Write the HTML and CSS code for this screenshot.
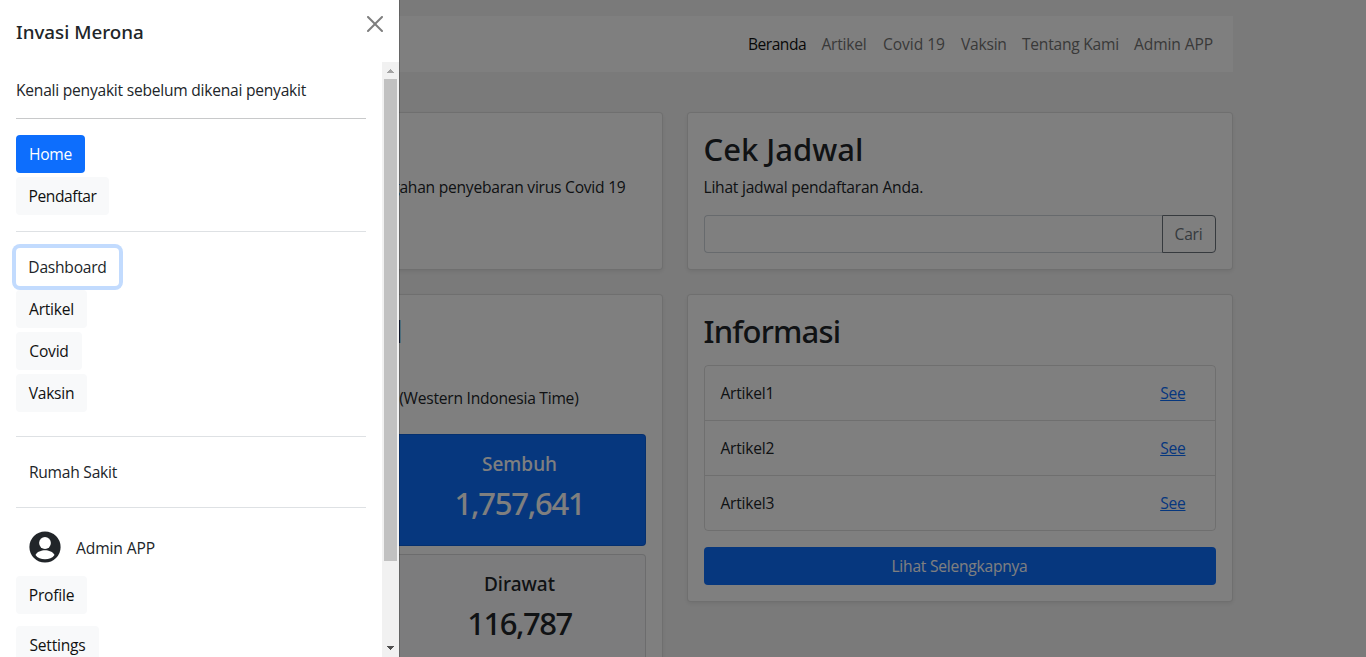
FILE: index.html
```html
<!DOCTYPE html>
<html lang="id">
<head>
<meta charset="utf-8">
<title>Invasi Merona</title>
<link rel="stylesheet" href="styles.css">
</head>
<body>
<div class="page">
  <nav class="navbar">
    <a class="nav-link active">Beranda</a>
    <a class="nav-link w-artikel">Artikel</a>
    <a class="nav-link w-covid">Covid 19</a>
    <a class="nav-link w-vaksin">Vaksin</a>
    <a class="nav-link w-tentang">Tentang Kami</a>
    <a class="nav-link w-admin">Admin APP</a>
  </nav>
  <main class="grid">
    <section class="card">
      <h2 class="title">Daftar</h2>
      <p class="text clipped intro">Daftar untuk pencegahan penyebaran virus Covid 19</p>
    </section>
    <section class="card">
      <h2 class="title">Cek Jadwal</h2>
      <p class="text">Lihat jadwal pendaftaran Anda.</p>
      <div class="search">
        <input class="search-input" type="text" aria-label="Jadwal">
        <button class="search-button">Cari</button>
      </div>
    </section>
    <section class="card">
      <h2 class="title clipped region">Indonesia Total</h2>
      <p class="text clipped updated">(Western Indonesia Time)</p>
      <div class="stats">
        <div class="stat primary"></div>
        <div class="stat primary"><h5>Sembuh</h5><strong class="wide">1,757,641</strong></div>
        <div class="stat"></div>
        <div class="stat"><h5>Dirawat</h5><strong class="narrow">116,787</strong></div>
      </div>
    </section>
    <section class="card info">
      <h2 class="title condensed">Informasi</h2>
      <ul class="list">
        <li><span>Artikel1</span><a>See</a></li>
        <li><span>Artikel2</span><a>See</a></li>
        <li><span>Artikel3</span><a>See</a></li>
      </ul>
      <button class="more">Lihat Selengkapnya</button>
    </section>
  </main>
</div>
<div class="backdrop"></div>
<aside class="drawer">
  <header class="drawer-head">
    <h5 class="brand">Invasi Merona</h5>
    <svg class="close" width="16" height="16" viewBox="0 0 16 16"><path d="M.293.293a1 1 0 0 1 1.414 0L8 6.586 14.293.293a1 1 0 1 1 1.414 1.414L9.414 8l6.293 6.293a1 1 0 0 1-1.414 1.414L8 9.414l-6.293 6.293a1 1 0 0 1-1.414-1.414L6.586 8 .293 1.707a1 1 0 0 1 0-1.414z"/></svg>
  </header>
  <div class="drawer-main">
    <div class="drawer-body">
      <p class="tagline">Kenali penyakit sebelum dikenai penyakit</p>
      <hr class="rule dark">
      <div class="menu">
        <a class="btn home">Home</a>
        <a class="btn pendaftar">Pendaftar</a>
      </div>
      <hr class="rule">
      <div class="menu">
        <a class="btn dashboard">Dashboard</a>
        <a class="btn">Artikel</a>
        <a class="btn covid">Covid</a>
        <a class="btn">Vaksin</a>
      </div>
      <hr class="rule spaced">
      <div class="menu"><a class="btn plain">Rumah Sakit</a></div>
      <hr class="rule">
      <div class="user">
        <svg width="32" height="32" viewBox="0 0 32 32"><circle cx="16" cy="16" r="15.600" fill="#212529"/><circle cx="16" cy="12" r="5.900" fill="#fff"/><path d="M6.500 24.100C7.600 20.800 12.600 19.300 16 19.300s8.400 1.500 9.500 4.800C23.500 27 19.900 28.300 16 28.300S8.500 27 6.500 24.100z" fill="#fff"/></svg>
        <span>Admin APP</span>
      </div>
      <div class="menu account">
        <a class="btn">Profile</a>
        <a class="btn settings">Settings</a>
      </div>
    </div>
    <div class="scrollbar">
      <svg width="17" height="17" viewBox="0 0 17 17" shape-rendering="crispEdges"><path d="M5 11h7v-1h-1V9h-1V8H9V7H8v1H7v1H6v1H5z" fill="#a3a3a3"/></svg>
      <div class="thumb"></div>
      <svg width="17" height="17" viewBox="0 0 17 17" shape-rendering="crispEdges"><path d="M5 6h7v1h-1v1h-1v1H9v1H8V9H7V8H6V7H5z" fill="#505050"/></svg>
    </div>
  </div>
</aside>
</body>
</html>
```
FILE: styles.css
```css
* { box-sizing: border-box; }
body {
  margin: 0;
  height: 657px;
  overflow: hidden;
  background: #f5f5f5;
  color: #212529;
  font: 15.600px/24px "Open Sans", "Noto Sans", sans-serif;
  letter-spacing: -.24px;
}
h2, h5, p, ul { margin: 0; padding: 0; }
h2, h5 { letter-spacing: 0; }
button { font: inherit; letter-spacing: inherit; }

.page { width: 1128px; margin-left: 104.5px; padding: 16px 0 0 12px; }
.navbar {
  display: flex;
  justify-content: flex-end;
  align-items: center;
  height: 56px;
  padding: 0 11.500px 0 12px;
  background: #fff;
}
.nav-link { padding: 0 8px; color: #737373; white-space: nowrap; }
.nav-link.active { width: 73.500px; color: #111; letter-spacing: -.5px; }
.w-artikel { width: 61.500px; }
.w-covid { width: 78px; letter-spacing: -.05px; }
.w-vaksin { width: 61px; }
.w-tentang { width: 112px; }
.w-admin { width: 95px; letter-spacing: -.1px; }

.grid {
  display: grid;
  grid-template-columns: 546px 546px;
  gap: 24px;
  align-items: start;
  margin-top: 40px;
}
.card {
  padding: 16px;
  border: 1px solid rgba(0, 0, 0, .125);
  border-radius: 4px;
  background: #fff;
  box-shadow: 0 2px 4px rgba(0, 0, 0, .075);
}
.card:first-child { height: 158px; }
.title {
  margin-bottom: 7px;
  padding-top: 1px;
  font: 500 31px/38.400px "Noto Sans", sans-serif;
}
.title.condensed { margin-bottom: 14px; letter-spacing: -.8px; }
.clipped { display: flex; justify-content: flex-end; white-space: nowrap; }
.intro { padding-right: 20px; }
.region { padding-right: 243px; }
.updated { padding: 28.500px 67px 24px 0; }

.search { display: flex; height: 38px; margin-top: 16px; }
.search-input {
  flex: 1;
  min-width: 0;
  border: 1px solid #ced4da;
  border-right: 0;
  border-radius: 4px 0 0 4px;
  background: #fff;
}
.search-button {
  width: 54px;
  padding: 0;
  border: 1px solid #6c757d;
  border-radius: 0 4px 4px 0;
  background: transparent;
  color: #6c757d;
}

.stats { display: grid; grid-template-columns: 1fr 1fr; gap: 8px; }
.stat {
  height: 112px;
  padding: 17px 16px;
  border: 1px solid rgba(0, 0, 0, .125);
  border-radius: 4px;
  text-align: center;
  background: #f8f9fa;
}
.stat.primary { background: #0d6efd; color: #fff; }
.stat h5 { margin-bottom: 8px; font: 500 19px/24px "Noto Sans", sans-serif; }
.stat strong { display: block; font: 500 31px/38.400px "Noto Sans", sans-serif; }
.wide { letter-spacing: -1.200px; }
.narrow { letter-spacing: -1.500px; }

.list { border: 1px solid rgba(0, 0, 0, .125); border-radius: 4px; list-style: none; }
.list li {
  display: flex;
  justify-content: space-between;
  align-items: center;
  height: 55px;
  padding: 0 29px 0 16px;
}
.list li:first-child { height: 54px; }
.list li + li { border-top: 1px solid rgba(0, 0, 0, .125); }
.list a { color: #0d6efd; text-decoration: underline; }
.more {
  display: block;
  width: 100%;
  height: 38px;
  margin-top: 16px;
  border: 0;
  border-radius: 4px;
  background: #0d6efd;
  color: #fff;
}

.backdrop { position: fixed; inset: 0; background: rgba(0, 0, 0, .5); }
.drawer {
  position: fixed;
  inset: 0 auto 0 0;
  display: flex;
  flex-direction: column;
  width: 400px;
  border-right: 1px solid rgba(0, 0, 0, .2);
  background: #fff;
  background-clip: padding-box;
}
.drawer-head {
  display: flex;
  justify-content: space-between;
  height: 62px;
  padding: 16px;
}
.brand { font: 500 18.800px/32px "Noto Sans", sans-serif; }
.close { opacity: .5; }
.drawer-main { display: flex; flex: 1; min-height: 0; }
.drawer-body { flex: 1; padding: 16px; overflow: hidden; }
.rule { height: 1px; margin: 16px 0; border: 0; background: #dee1e4; }
.rule.dark { background: #c8c9ca; }
.rule.spaced { margin-top: 24px; }
.menu { display: flex; flex-direction: column; align-items: flex-start; gap: 4px; }
.btn {
  display: flex;
  align-items: center;
  justify-content: center;
  width: 71px;
  height: 38px;
  border-radius: 4px;
  background: #f8f9fa;
  color: #111;
}
.btn.home { width: 69px; background: #0d6efd; color: #fff; }
.pendaftar { width: 93px; letter-spacing: -.4px; }
.btn.dashboard { width: 103px; background: #fff; color: #212529; box-shadow: 0 0 0 4px #c2dbfe; }
.covid { width: 66px; }
.btn.plain { width: 114px; background: none; color: #212529; }
.settings { width: 83px; }
.user { display: flex; align-items: center; gap: 15.500px; height: 52px; padding: 0 13px 7px 12.500px; letter-spacing: -.1px; }
.user span { padding-top: 3px; }
.account { gap: 12px; }
.scrollbar {
  display: flex;
  flex-direction: column;
  width: 17px;
  background: #f1f1f1;
}
.scrollbar svg { display: block; flex: none; }
.thumb { height: 482px; margin: 0 2px auto; background: #c1c1c1; }
```
